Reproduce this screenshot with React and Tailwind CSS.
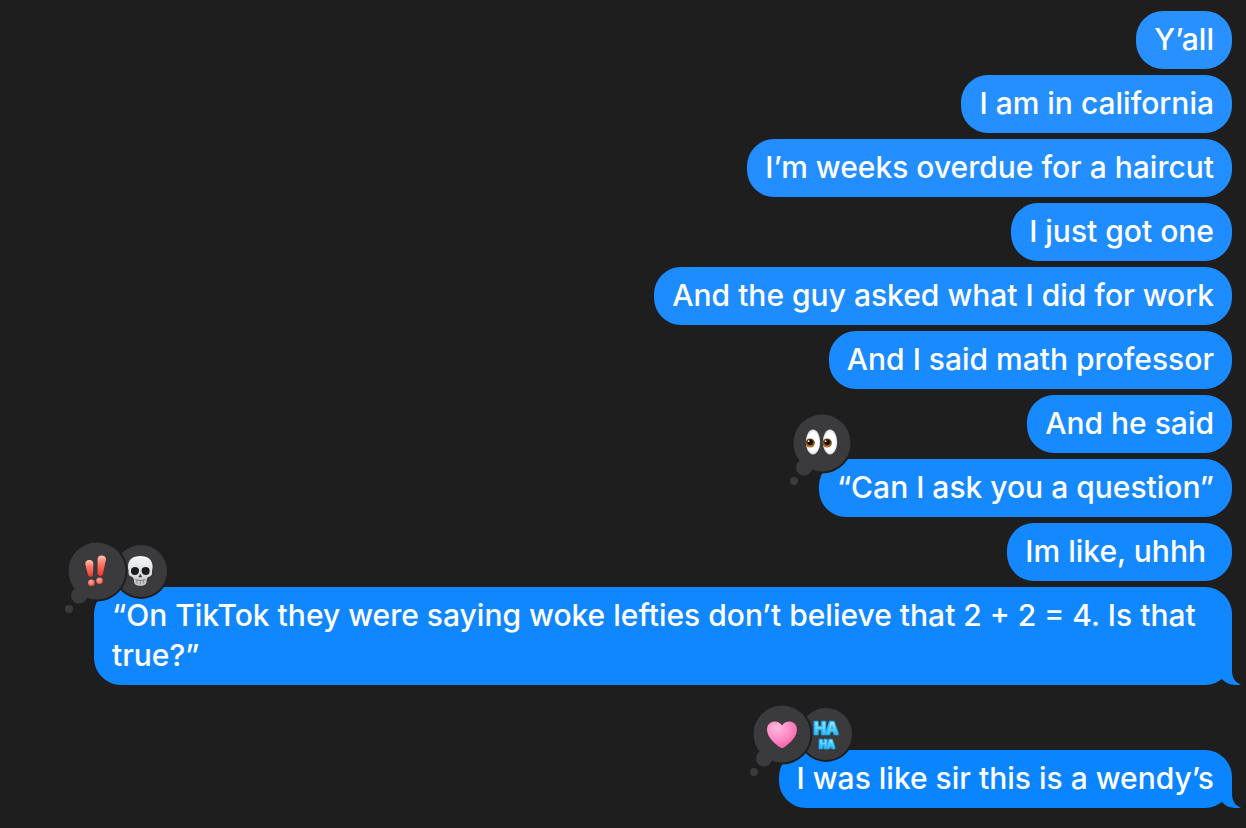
const messages = [
    { id: 1, text: "Y’all", color: "bg-[#2890ff]" },
    { id: 2, text: "I am in california", color: "bg-[#258fff]" },
    { id: 3, text: "I’m weeks overdue for a haircut", color: "bg-[#228eff]" },
    { id: 4, text: "I just got one", color: "bg-[#1f8dff]" },
    { id: 5, text: "And the guy asked what I did for work", color: "bg-[#1d8cff]" },
    { id: 6, text: "And I said math professor", color: "bg-[#1a8bff]" },
    { id: 7, text: "And he said", color: "bg-[#188aff]" },
    { id: 8, text: "“Can I ask you a question”", color: "bg-[#1689ff]", reactions: ["eyes"] },
    { id: 9, text: "Im like, uhhh\u00a0", color: "bg-[#1488ff]" },
    {
        id: 10,
        text: "“On TikTok they were saying woke lefties don’t believe that 2 + 2 = 4. Is that true?”",
        color: "bg-[#1187ff]",
        tail: "text-[#1187ff]",
        reactions: ["emphasis", "skull"],
    },
    {
        id: 11,
        text: "I was like sir this is a wendy’s",
        color: "bg-[#0b84ff]",
        tail: "text-[#0b84ff]",
        reactions: ["heart", "haha"],
        spaced: true,
    },
];

const Eyes = () => (
    <g>
        <defs>
            <radialGradient id="eyeWhite">
                <stop offset="0.75" stopColor="#fff" />
                <stop offset="1" stopColor="#d9d9dc" />
            </radialGradient>
            <radialGradient id="iris" cx="0.5" cy="0.75" r="0.6">
                <stop offset="0" stopColor="#d99424" />
                <stop offset="1" stopColor="#6a3a08" />
            </radialGradient>
        </defs>
        {[25, 42].map((x) => (
            <g key={x}>
                <ellipse cx={x} cy="33" rx="7.2" ry="12.4" fill="url(#eyeWhite)" />
                <circle cx={x - 2.8} cy="34" r="4.6" fill="url(#iris)" />
                <circle cx={x - 2.8} cy="33.6" r="2.8" fill="#1f0d04" />
                <circle cx={x - 4.4} cy="32.2" r="0.9" fill="#fff" />
            </g>
        ))}
    </g>
);

const Emphasis = () => (
    <g>
        <defs>
            <linearGradient id="mark" x1="0" y1="0" x2="0" y2="1">
                <stop offset="0" stopColor="#ffc3b4" />
                <stop offset="0.4" stopColor="#ff7a66" />
                <stop offset="1" stopColor="#f0362c" />
            </linearGradient>
            <radialGradient id="dot" cx="0.4" cy="0.35" r="0.7">
                <stop offset="0" stopColor="#ffb5a5" />
                <stop offset="1" stopColor="#f4483c" />
            </radialGradient>
        </defs>
        <path
            d="M22.3 27.2C22 24.8 23.7 23.2 26.2 23.1C28.8 23 30.3 24.4 30.3 26.8L29.9 37C29.8 39 29 39.8 27.6 39.8C26.1 39.9 25.2 39.1 24.8 37.3Z"
            fill="url(#mark)"
        />
        <path
            d="M34.6 22C34.7 19.6 36.4 18.3 39 18.5C41.8 18.7 43.2 20.2 42.9 22.8L40.1 36C39.7 38.1 38.7 39 37.1 38.9C35.5 38.8 34.7 37.8 34.6 36Z"
            fill="url(#mark)"
        />
        <circle cx="28.4" cy="45.8" r="3.3" fill="url(#dot)" />
        <circle cx="36.6" cy="43.8" r="3.3" fill="url(#dot)" />
    </g>
);

const Skull = () => (
    <g>
        <defs>
            <linearGradient id="bone" x1="0" y1="0" x2="0" y2="1">
                <stop offset="0" stopColor="#f4f5f7" />
                <stop offset="0.6" stopColor="#dcdde1" />
                <stop offset="1" stopColor="#c2c3c8" />
            </linearGradient>
        </defs>
        <path
            d="M77.3 19C85 19 89.6 23 89.6 29.6C89.6 31.8 89 33 89 34.6C89.3 37.2 88.6 38.9 86.6 39.5C84.6 40 83.9 41 83.7 43C83.5 47.2 82 48.8 77.3 48.8C72.6 48.8 71.1 47.2 70.9 43C70.7 41 70 40 68 39.5C66 38.9 65.3 37.2 65.6 34.6C65.6 33 65 31.8 65 29.6C65 23 69.6 19 77.3 19Z"
            fill="url(#bone)"
        />
        <path d="M69 31C71.2 29.3 76 29.8 76 33.4C76 36.5 74.2 37.9 71.7 37.9C69.2 37.9 68 36.4 68 34.2C68 32.8 68.3 31.7 69 31Z" fill="#1d1b1c" />
        <path d="M85.6 31C83.4 29.3 78.6 29.8 78.6 33.4C78.6 36.5 80.4 37.9 82.9 37.9C85.4 37.9 86.6 36.4 86.6 34.2C86.6 32.8 86.3 31.7 85.6 31Z" fill="#1d1b1c" />
        <path d="M77.3 36.8L79.2 40.2H75.4Z" fill="#353336" />
        <path d="M72.3 42.6C75.4 43.6 79.2 43.6 82.3 42.6" stroke="#706f74" strokeWidth="1" fill="none" />
        <path d="M74 43.2V46.6M77.3 43.4V47M80.6 43.2V46.6" stroke="#77767b" strokeWidth="0.8" />
    </g>
);

const Heart = () => (
    <g>
        <defs>
            <radialGradient id="pink" cx="0.35" cy="0.25" r="0.85">
                <stop offset="0" stopColor="#ffb9de" />
                <stop offset="0.55" stopColor="#ff86c3" />
                <stop offset="1" stopColor="#f2569f" />
            </radialGradient>
        </defs>
        <path
            d="M34 25.6C35.7 22.8 38.2 21.4 41.3 21.4C46 21.4 49 25 49 29.6C49 36.6 42.6 42.6 36.2 47.3C34.8 48.4 33.2 48.4 31.8 47.3C25.4 42.6 19 36.6 19 29.6C19 25 22 21.4 26.7 21.4C29.8 21.4 32.3 22.8 34 25.6Z"
            fill="url(#pink)"
        />
    </g>
);

const Haha = () => (
    <g
        fontFamily="Inter, sans-serif"
        fontWeight="700"
        textAnchor="middle"
        strokeLinejoin="round"
        paintOrder="stroke"
    >
        <defs>
            <linearGradient id="ice" x1="0" y1="0.15" x2="0" y2="0.85">
                <stop offset="0" stopColor="#a5ecff" />
                <stop offset="1" stopColor="#2cb9fa" />
            </linearGradient>
        </defs>
        <text x="78" y="34" fontSize="16" fill="url(#ice)" stroke="#22b2f6" strokeWidth="2.6">HA</text>
        <text x="79" y="48" fontSize="10" fill="url(#ice)" stroke="#22b2f6" strokeWidth="2.6">HA</text>
    </g>
);

const icons = {
    eyes: Eyes,
    emphasis: Emphasis,
    skull: Skull,
    heart: Heart,
    haha: Haha,
};

const Reactions = ({ reactions }) => {
    const Front = icons[reactions[0]];
    const Back = icons[reactions[1]];

    return (
        <svg
            width="108"
            height="80"
            viewBox="0 0 108 80"
            role="img"
            aria-label={reactions.join(", ")}
            className="absolute -left-[31px] -top-[50px]"
        >
            {Back && (
                <>
                    <circle cx="78" cy="34" r="28" fill="#1e1e1e" />
                    <circle cx="78" cy="34" r="26" fill="#3b3b3d" />
                    <Back />
                </>
            )}
            <circle cx="34" cy="34" r="30.5" fill="#1e1e1e" />
            <circle cx="34" cy="34" r="28.5" fill="#3b3b3d" />
            <circle cx="16" cy="58.5" r="8" fill="#3b3b3d" />
            <circle cx="6" cy="72" r="4" fill="#3b3b3d" />
            <Front />
        </svg>
    );
};

const MessageItem = ({ message }) => {
    return (
        <li
            className={`relative max-w-[1138px] rounded-[27px] px-[18px] pt-2 pb-[10px] ${message.color}
                ${message.spaced ? "mt-[59px]" : ""}
            `}
        >
            <p>{message.text}</p>
            {message.tail && (
                <svg
                    width="34"
                    height="28"
                    viewBox="0 0 34 28"
                    aria-hidden="true"
                    className={`absolute -right-[9px] bottom-0 ${message.tail}`}
                >
                    <path d="M25 0V14C25 20 28 26 34 27.4C26 29 19 27 15 22Z" fill="currentColor" />
                </svg>
            )}
            {message.reactions && <Reactions reactions={message.reactions} />}
        </li>
    );
};

export default function App() {
    return (
        <main className="min-h-screen bg-[#1e1e1e] px-[14px] pt-[11px] pb-5 overflow-hidden">
            <ul className="flex flex-col items-end gap-[6px] font-['Inter',sans-serif] text-[30px] font-medium leading-[40px] text-white">
                {messages.map((message) => (
                    <MessageItem key={message.id} message={message} />
                ))}
            </ul>
        </main>
    );
}
